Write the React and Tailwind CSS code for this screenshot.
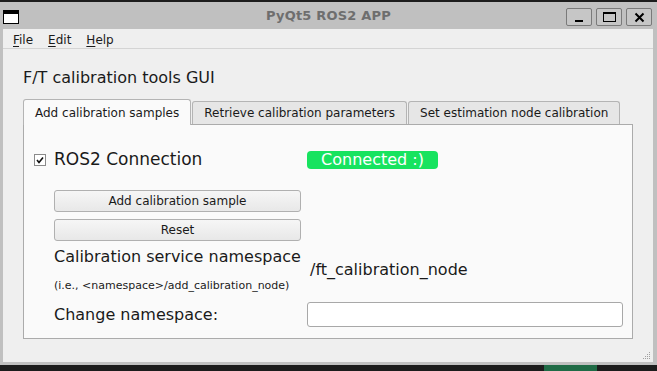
import React from 'react';

const FONT = { fontFamily: '"DejaVu Sans", "Liberation Sans", sans-serif' };

function WinButton({ children }) {
  return (
    <div className="w-[26px] h-[18px] border border-[#7a7a7a] rounded-[2px] bg-[#c6c6c6] flex items-center justify-center">
      {children}
    </div>
  );
}

function TitleBar() {
  return (
    <div className="h-[27px] bg-[#c0c0c0] flex items-center relative shrink-0">
      {/* window icon */}
      <div className="ml-[3px] mt-[3px] w-[16px] h-[14px] bg-white border border-black border-t-[4px]" />
      <div className="absolute inset-0 flex items-center justify-center pointer-events-none">
        <span className="text-[13px] font-bold text-[#6e6e6e] tracking-[0.2px]">PyQt5 ROS2 APP</span>
      </div>
      <div className="ml-auto mr-[5px] mt-[3px] flex gap-[4px]">
        <WinButton>
          <div className="w-[8px] h-[2px] bg-black mt-[8px]" />
        </WinButton>
        <WinButton>
          <div className="w-[13px] h-[10px] border border-black border-t-[2px]" />
        </WinButton>
        <WinButton>
          <svg width="11" height="11" viewBox="0 0 11 11">
            <path d="M1.5 1.5 L9.5 9.5 M9.5 1.5 L1.5 9.5" stroke="black" strokeWidth="2" />
          </svg>
        </WinButton>
      </div>
    </div>
  );
}

function MenuItem({ first, rest }) {
  return (
    <span className="text-[12px] text-[#1a1a1a]">
      <span className="underline underline-offset-2">{first}</span>
      {rest}
    </span>
  );
}

function Tab({ label, active }) {
  if (active) {
    return (
      <div className="h-[26px] px-[11px] bg-[#fafafa] border border-[#b4b4b4] border-b-0 rounded-t-[3px] flex items-center text-[12px] text-[#1a1a1a] relative z-10 -mb-px">
        {label}
      </div>
    );
  }
  return (
    <div className="h-[23px] mt-[2px] px-[11px] bg-[#e6e6e6] border border-[#b4b4b4] border-b-0 rounded-t-[3px] flex items-center text-[12px] text-[#1a1a1a]">
      {label}
    </div>
  );
}

function PushButton({ children }) {
  return (
    <div className="w-[247px] h-[22px] border border-[#b0b0b0] rounded-[3px] bg-gradient-to-b from-[#f6f6f6] to-[#e8e8e8] flex items-center justify-center text-[12px] text-[#1a1a1a]">
      {children}
    </div>
  );
}

export default function App() {
  return (
    <div className="w-[657px] h-[371px] bg-[#1c1c1c] flex flex-col overflow-hidden" style={FONT}>
      <div className="h-[2px] shrink-0" />
      <TitleBar />
      <div className="h-[336px] shrink-0 bg-[#efefef] border-l-[3px] border-r-[4px] border-b-[3px] border-[#c0c0c0] flex flex-col relative">
        {/* menu bar */}
        <div className="h-[20px] border-b border-[#d4d4d4] flex items-center gap-[15px] pl-[10px] pt-[2px]">
          <MenuItem first="F" rest="ile" />
          <MenuItem first="E" rest="dit" />
          <MenuItem first="H" rest="elp" />
        </div>

        <div className="pl-[20px] pr-[20px]">
          <h1 className="mt-[19px] h-[20px] text-[16px] leading-[20px] text-[#1a1a1a]">F/T calibration tools GUI</h1>

          {/* tabs */}
          <div className="mt-[11px] flex gap-[1px]">
            <Tab label="Add calibration samples" active />
            <Tab label="Retrieve calibration parameters" />
            <Tab label="Set estimation node calibration" />
          </div>

          {/* panel */}
          <div className="h-[215px] bg-[#fafafa] border border-[#ababab] flex flex-col">
            <div className="mt-[26px] h-[18px] flex items-center">
              <div className="ml-[10px] w-[12px] h-[12px] border border-[#8a8a8a] bg-white flex items-center justify-center">
                <svg width="10" height="10" viewBox="0 0 10 10">
                  <path d="M2 5 L4 7.5 L8 2.5" stroke="#111" strokeWidth="1.6" fill="none" />
                </svg>
              </div>
              <span className="ml-[8px] w-[253px] text-[17px] text-[#1a1a1a] whitespace-nowrap">ROS2 Connection</span>
              <div className="w-[131px] h-[18px] rounded-[4px] bg-[#17e35f] flex items-center justify-center text-[16px] text-white leading-none">
                Connected :)
              </div>
            </div>

            <div className="ml-[30px] mt-[21px] flex flex-col gap-[7px]">
              <PushButton>Add calibration sample</PushButton>
              <PushButton>Reset</PushButton>
            </div>

            <div className="ml-[30px] mt-[6px] flex items-center">
              <div className="w-[253px] shrink-0 flex flex-col whitespace-nowrap">
                <span className="text-[16px] leading-[20px] text-[#1a1a1a]">Calibration service namespace</span>
                <span className="mt-[12px] text-[11px] leading-[14px] text-[#1a1a1a]">(i.e., &lt;namespace&gt;/add_calibration_node)</span>
              </div>
              <span className="ml-[3px] text-[16px] text-[#1a1a1a] whitespace-nowrap">/ft_calibration_node</span>
            </div>

            <div className="ml-[30px] mt-[9px] flex items-center">
              <span className="w-[253px] shrink-0 text-[16px] text-[#1a1a1a] whitespace-nowrap">Change namespace:</span>
              <div className="w-[316px] h-[25px] bg-white border border-[#a8a8a8] rounded-[3px]" />
            </div>
          </div>
        </div>

        {/* size grip */}
        <svg className="absolute right-[2px] bottom-[2px]" width="10" height="10" viewBox="0 0 10 10">
          {[[8, 2], [6, 4], [8, 4], [4, 6], [6, 6], [8, 6], [2, 8], [4, 8], [6, 8], [8, 8]].map(([x, y], i) => (
            <rect key={i} x={x} y={y} width="1" height="1" fill="#a0a0a0" />
          ))}
        </svg>
      </div>
      <div className="flex-1 flex items-start">
        <div className="ml-[544px] w-[53px] h-full bg-[#1f6b46]" />
      </div>
    </div>
  );
}
